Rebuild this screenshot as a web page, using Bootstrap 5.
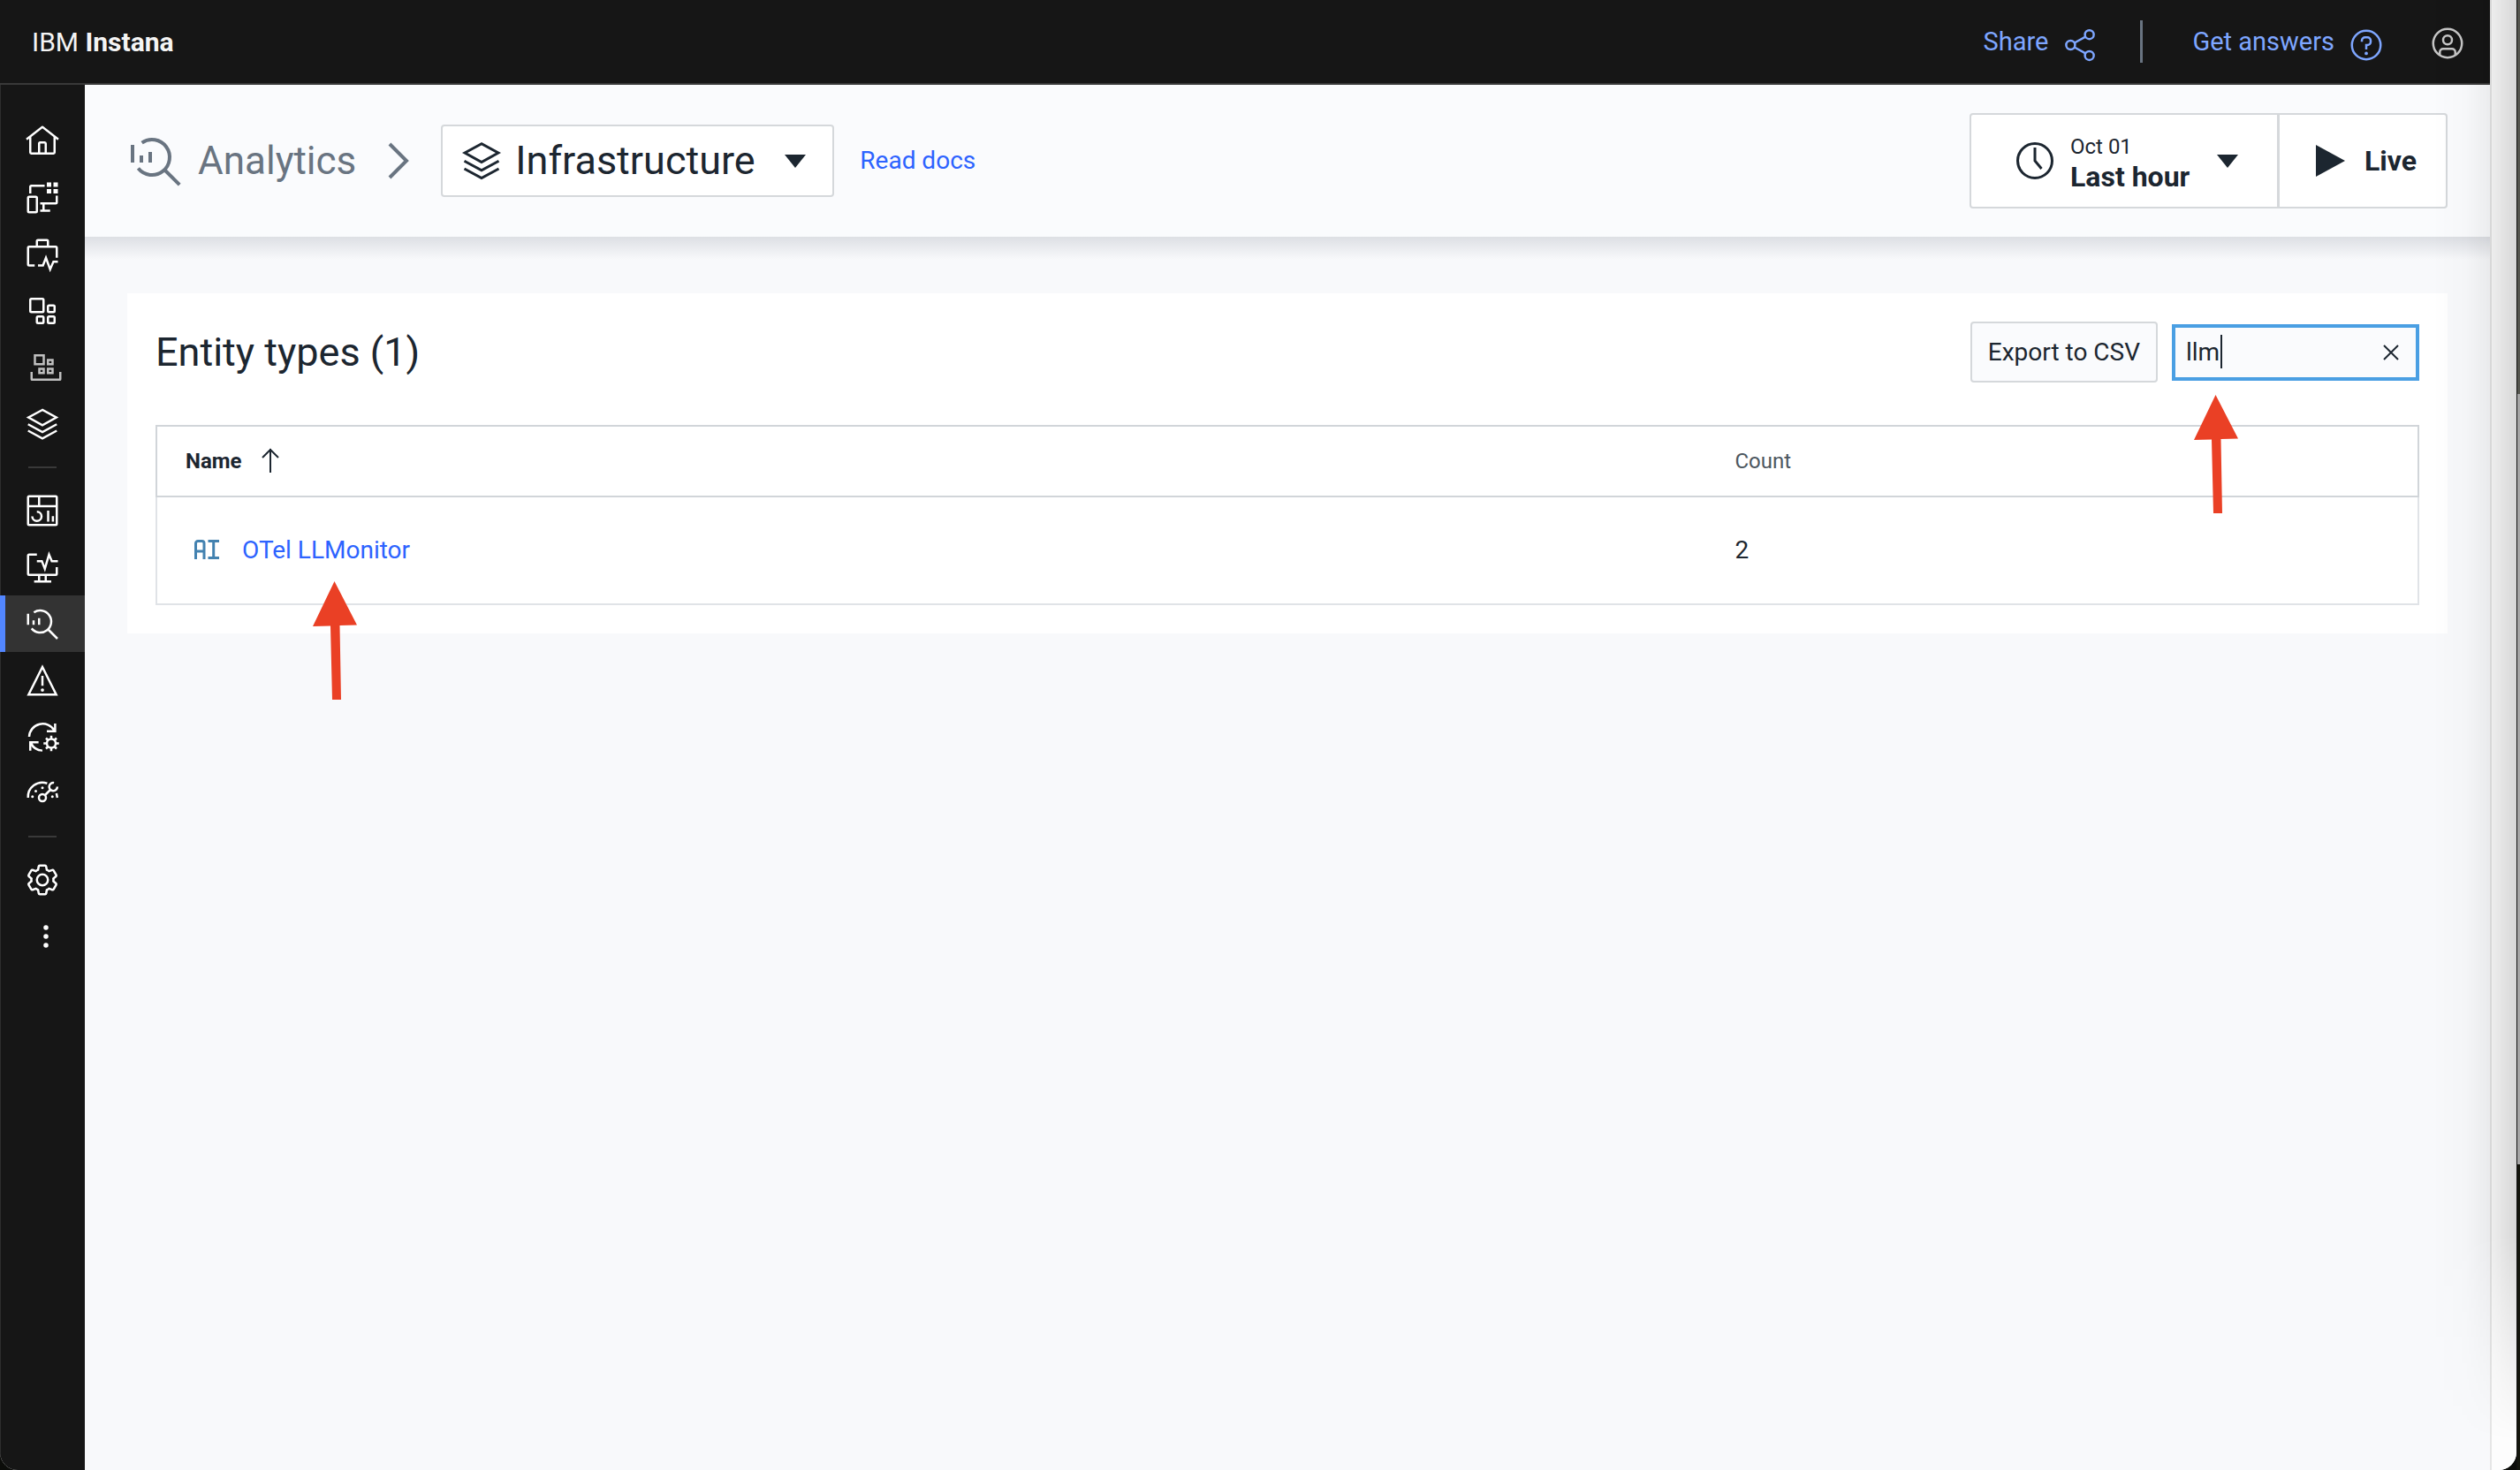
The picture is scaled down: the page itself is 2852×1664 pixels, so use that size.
<!DOCTYPE html>
<html lang="en">
<head>
<meta charset="utf-8">
<meta name="viewport" content="width=device-width, initial-scale=1">
<title>IBM Instana – Analytics</title>
<link href="https://cdn.jsdelivr.net/npm/bootstrap@5.3.0/dist/css/bootstrap.min.css" rel="stylesheet">
<style>
  :root { --ink: #1c2630; --line: #d5d8db; --link: #2d63ff; --dim: #697481; }
  body { font-family: Roboto, "Liberation Sans", sans-serif; font-size: 28px; line-height: 36px; color: var(--ink); background: #0c0d0a; }
  a { color: var(--link); text-decoration: none; }
  .ico { width: 40px; height: 40px; flex: none; fill: none; stroke: currentColor; stroke-width: 2; }
  .ico .solid { fill: currentColor; stroke: none; }
  .ico-md { width: 48px; height: 48px; }
  .ico-lg { width: 64px; height: 64px; }

  /* window */
  .app-window { border-radius: 0 0 20px 20px; overflow: hidden; background: #f8f9fb; }
  .scroll-gutter { width: 30px; background: #fdfdfd; border-left: 2px solid #e6e6e6; }
  .edge-shade { top: 0; right: 0; bottom: 0; width: 96px; pointer-events: none;
    background: linear-gradient(90deg, transparent, rgba(0,0,0,.015) 40%, rgba(0,0,0,.06) 70%, rgba(0,0,0,.15));
    -webkit-mask-image: linear-gradient(#000 84%, transparent 98%); mask-image: linear-gradient(#000 84%, transparent 98%); }
  .behind { width: 4px; background: linear-gradient(#55564f 0 446px, #a6a6a6 446px 1318px, #14160d 1318px); border-left: 1px solid #111; }

  /* top bar */
  .topbar { height: 96px; background: #161616; color: #f4f4f4; border-bottom: 2px solid #393939; padding: 0 28px 0 36px; font-size: 29px; }
  .topbar a { color: #7ea6ff; }
  .topbar .brand { color: #f4f4f4; font-size: 30px; padding-top: 2px; }
  .topbar .brand b { font-weight: 700; }
  .topbar .vline { width: 3px; height: 48px; background: #697481; margin: 0 56px 0 48px; }
  .topbar .account { color: #c6c6c6; margin-left: 52px; }

  /* side navigation */
  .sidebar { width: 96px; background: #161616; box-shadow: inset 1px 0 #2e2e2e; padding-top: 32px; }
  .side-item { height: 64px; color: #fff; }
  .side-item.current { background: #333; box-shadow: inset 6px 0 #5286ff; }
  .side-item.quiet { color: #c0c0c0; padding-left: 8px; }
  .side-rule { width: 32px; height: 2px; margin: 16px auto; background: #393939; }

  /* page heading */
  .page-head { height: 172px; background: #fafbfd; padding: 0 48px; }
  .crumb { font-size: 44px; line-height: 56px; color: var(--dim); }
  .crumb-sep { width: 24px; height: 44px; margin: 0 36px; fill: none; stroke: var(--dim); stroke-width: 4; }
  .scope { height: 82px; width: 445px; background: #fff; border: 2px solid var(--line); border-radius: 4px; padding: 0 30px 0 20px; gap: 14px; }
  .scope select { appearance: none; border: 0; background: transparent; padding: 0; font-size: 45px; line-height: 56px; color: var(--ink); outline: 0; }
  .tri-down { width: 24px; height: 15px; fill: var(--ink); flex: none; }
  .docs { margin-left: 29px; }
  .time-group .btn { height: 108px; background: #fff; border: 2px solid var(--line); border-radius: 4px; color: var(--ink); font-size: 32px; line-height: 36px; font-weight: 700; }
  .time-group .when { width: 350px; padding: 0 44px 0 48px; gap: 16px; text-align: left; }
  .time-group .when span { padding-top: 4px; }
  .time-group .when small { font-size: 24px; line-height: 32px; font-weight: 400; }
  .time-group .live { width: 192px; padding: 0 32px 0 40px; gap: 22px; }

  /* content */
  .content { padding: 64px 48px; background: #f8f9fb linear-gradient(#dddfe4, #f8f9fb 26px) no-repeat; }
  .panel { background: #fff; padding: 32px; }
  .panel h1 { font-size: 45px; line-height: 56px; font-weight: 400; }
  .panel-top { margin-bottom: 48px; gap: 16px; }
  .btn-export { height: 69px; padding: 0 18px; font-size: 28px; color: var(--ink); background: #fafbfd; border: 2px solid var(--line); border-radius: 4px; }
  .filter { width: 280px; }
  .filter input { height: 64px; border: 4px solid #4a9fe3; border-radius: 0; background: #fafbfd; padding: 0 56px 0 12px; font-size: 28px; color: var(--ink); }
  .filter .text-cursor { left: 55px; top: 12px; width: 2px; height: 38px; background: var(--ink); }
  .filter .clear { right: 22px; top: 22px; width: 20px; height: 20px; border: 0; background: none; padding: 0; line-height: 0; color: var(--ink); }
  .pointer { width: 50px; height: 135px; fill: #ea4025; z-index: 2; }
  .filter .pointer { left: 25px; top: 80px; }
  .entity .pointer { left: 80px; top: 52px; }
  .grid-table { border: 2px solid #e0e3e7; margin: 0; }
  .grid-table thead { border: 2px solid #d1d5d9; }
  .grid-table th { height: 80px; font-size: 24px; line-height: 32px; }
  .grid-table td { height: 122px; }
  .grid-table .col-name { width: 69%; }
  .grid-table th, .grid-table td { padding: 0 20px; vertical-align: middle; }
  .grid-table th:first-child { padding-left: 32px; }
  .grid-table td:first-child { padding-left: 42px; }
  .grid-table th.count { font-weight: 400; color: #4d5760; }
  .sort { width: 20px; height: 28px; margin-left: 22px; fill: none; stroke: var(--ink); stroke-width: 2; vertical-align: -5px; }
  .ai { width: 28px; height: 22px; margin-right: 26px; fill: none; stroke: #4382b0; stroke-width: 3; vertical-align: -1px; }
</style>
<script src="https://cdn.jsdelivr.net/npm/bootstrap@5.3.0/dist/js/bootstrap.bundle.min.js"></script>
</head>
<body>
<svg class="d-none">
  <symbol id="i-explore" viewBox="0 0 32 32"><path d="M3 7v10M8 13v4M13 11v6M8.3 5.8A10 10 0 1 1 6.2 20.3M21 21l8.6 8.6"/></symbol>
  <symbol id="i-layers" viewBox="0 0 32 32"><path d="M16 3.2 3.4 10 16 17l12.6-7ZM3 16.2l13 7 13-7M3 22l13 7 13-7"/></symbol>
  <symbol id="i-pointer" viewBox="0 0 50 135"><path d="M24.500 0 50 49.500 30.500 50 32 134H22L20 50.500 0 51Z"/></symbol>
</svg>

<div class="d-flex min-vh-100">
  <div class="app-window d-flex flex-grow-1 position-relative">
    <div class="d-flex flex-column flex-grow-1">

      <header class="topbar d-flex align-items-center">
        <a class="brand me-auto" href="#">IBM <b>Instana</b></a>
        <a class="d-flex align-items-center gap-3" href="#">Share
          <svg class="ico mt-2" viewBox="0 0 32 32"><circle cx="24.500" cy="6.500" r="4"/><circle cx="7.500" cy="16" r="4"/><circle cx="24.500" cy="25.500" r="4"/><path d="m11 14 10-5.500M11 18l10 5.500"/></svg>
        </a>
        <span class="vline"></span>
        <a class="d-flex align-items-center gap-3" href="#">Get answers
          <svg class="ico mt-2" viewBox="0 0 32 32"><circle cx="16" cy="16" r="13"/><path d="M12 13v-1a3 3 0 0 1 3-3h2a3 3 0 0 1 3 3v1a3 3 0 0 1-3 3h-1v4"/><circle class="solid" cx="16" cy="23.500" r="1.500"/></svg>
        </a>
        <a class="account" href="#" aria-label="Account">
          <svg class="ico mt-1" viewBox="0 0 32 32"><circle cx="16" cy="16" r="13"/><circle cx="16" cy="13" r="4"/><path d="M9 26.500V24a3 3 0 0 1 3-3h8a3 3 0 0 1 3 3v2.500"/></svg>
        </a>
      </header>

      <div class="d-flex flex-grow-1">
        <nav class="sidebar flex-shrink-0" aria-label="Main">
          <a class="side-item d-flex align-items-center justify-content-center" href="#" aria-label="Home">
            <svg class="ico" viewBox="0 0 32 32"><path class="solid" d="M16.6123,2.2138a1.01,1.01,0,0,0-1.2427,0L1,13.4194l1.2427,1.5717L4,13.6209V26a2.0041,2.0041,0,0,0,2,2H26a2.0037,2.0037,0,0,0,2-2V13.63L29.7573,15,31,13.4282ZM18,26H14V18h4Zm2,0V18a2.0023,2.0023,0,0,0-2-2H14a2.002,2.002,0,0,0-2,2v8H6V12.0615l10-7.79,10,7.8005V26Z"/></svg></a>
          <a class="side-item d-flex align-items-center justify-content-center" href="#" aria-label="Websites and mobile apps">
            <svg class="ico" viewBox="0 0 32 32"><rect x="3" y="15" width="8" height="14" rx="1"/><path d="M5 12V6a1 1 0 0 1 1-1h12M29 14v6a1 1 0 0 1-1 1H14M17 21v7M14 27.500h9"/><path class="solid" d="M20 2h4v4h-4zM26 2h4v4h-4zM20 8h4v4h-4zM26 8h4v4h-4z"/></svg></a>
          <a class="side-item d-flex align-items-center justify-content-center" href="#" aria-label="Business monitoring">
            <svg class="ico" viewBox="0 0 32 32"><path d="M9 26H4a1 1 0 0 1-1-1V10a1 1 0 0 1 1-1h24a1 1 0 0 1 1 1v9M11 9V4a1 1 0 0 1 1-1h8a1 1 0 0 1 1 1v5M12 26h4.500l2.700-7 3.800 10.500 3-7h4"/></svg></a>
          <a class="side-item d-flex align-items-center justify-content-center" href="#" aria-label="Applications">
            <svg class="ico" viewBox="0 0 32 32"><rect x="5" y="5" width="12" height="12" rx="1"/><rect x="21" y="11" width="6" height="6" rx="1"/><rect x="11" y="21" width="6" height="6" rx="1"/><rect x="21" y="21" width="6" height="6" rx="1"/></svg></a>
          <a class="side-item quiet d-flex align-items-center justify-content-center" href="#" aria-label="Platforms">
            <svg class="ico" viewBox="0 0 32 32"><path d="M6 5h8v8H6zM17.800 9.200H22V13h-4.200zM10 17.200h4V21h-4zM17.800 17.200H22V21h-4.200zM3 20v6.500a.5.5 0 0 0 .5.500h25a.5.5 0 0 0 .5-.500V20"/></svg></a>
          <a class="side-item d-flex align-items-center justify-content-center" href="#" aria-label="Infrastructure">
            <svg class="ico"><use href="#i-layers"/></svg></a>
          <div class="side-rule"></div>
          <a class="side-item d-flex align-items-center justify-content-center" href="#" aria-label="Custom dashboards">
            <svg class="ico" viewBox="0 0 32 32"><rect x="3" y="3" width="26" height="26" rx="1"/><path d="M3 12h26M13 3v9M11 17a4.200 4.200 0 1 1-4.200 4.200M21.200 16v10M25.500 21v5"/></svg></a>
          <a class="side-item d-flex align-items-center justify-content-center" href="#" aria-label="Synthetic monitoring">
            <svg class="ico" viewBox="0 0 32 32"><path d="M11 4.500H4a1 1 0 0 0-1 1V22a1 1 0 0 0 1 1h24a1 1 0 0 0 1-1v-6M13 23v6M19 23v6M8.500 29h15.500M11 10.500h4.500l2.700 7 3.800-13 2.500 6H30"/></svg></a>
          <a class="side-item current d-flex align-items-center justify-content-center" href="#" aria-label="Analytics" aria-current="page">
            <svg class="ico"><use href="#i-explore"/></svg></a>
          <a class="side-item d-flex align-items-center justify-content-center" href="#" aria-label="Events">
            <svg class="ico" viewBox="0 0 32 32"><path d="M16 4 3.500 29h25zM16 12v9"/><circle class="solid" cx="16" cy="24.800" r="1.500"/></svg></a>
          <a class="side-item d-flex align-items-center justify-content-center" href="#" aria-label="Automation">
            <svg class="ico" viewBox="0 0 32 32"><path d="M4 16A12.300 12.300 0 0 1 27 10.500M27.500 4v7h-7.500M5 28.500V21h7.500M5.500 21.500A12 12 0 0 0 16 28.500"/><circle cx="24" cy="22" r="4"/><path d="M24 18v-3M24 26v3M20 22h-3M28 22h3M21.200 19.200l-2-2M26.800 24.800l2 2M21.200 24.800l-2 2M26.800 19.200l2-2"/></svg></a>
          <a class="side-item d-flex align-items-center justify-content-center" href="#" aria-label="Service levels">
            <svg class="ico" viewBox="0 0 32 32"><path d="M3 20A13 13 0 0 1 20.300 7M28.700 16l.8 4"/><circle cx="16" cy="20" r="3.200"/><path d="m18.200 17.800 5-5M26.500 6.500a3.700 3.700 0 1 0 3 3.500"/><g class="solid"><circle cx="7" cy="19" r="1.200"/><circle cx="10" cy="14" r="1.200"/><circle cx="16" cy="11" r="1.200"/><circle cx="25" cy="19" r="1.200"/></g></svg></a>
          <div class="side-rule"></div>
          <a class="side-item d-flex align-items-center justify-content-center" href="#" aria-label="Settings">
            <svg class="ico" viewBox="0 0 32 32"><path class="solid" d="M27,16.76c0-.25,0-.5,0-.76s0-.51,0-.77l1.92-1.68A2,2,0,0,0,29.3,11L26.94,7a2,2,0,0,0-1.73-1,2,2,0,0,0-.64.1l-2.43.82a11.35,11.35,0,0,0-1.31-.75l-.51-2.52a2,2,0,0,0-2-1.61H13.64a2,2,0,0,0-2,1.61l-.51,2.52a11.48,11.48,0,0,0-1.32.75L7.43,6.06A2,2,0,0,0,6.79,6,2,2,0,0,0,5.06,7L2.7,11a2,2,0,0,0,.41,2.51L5,15.24c0,.25,0,.5,0,.76s0,.51,0,.77L3.11,18.45A2,2,0,0,0,2.7,21L5.06,25a2,2,0,0,0,1.73,1,2,2,0,0,0,.64-.1l2.43-.82a11.35,11.35,0,0,0,1.31.75l.51,2.52a2,2,0,0,0,2,1.61h4.72a2,2,0,0,0,2-1.61l.51-2.52a11.48,11.48,0,0,0,1.32-.75l2.42.82a2,2,0,0,0,.64.1,2,2,0,0,0,1.73-1L29.3,21a2,2,0,0,0-.41-2.51ZM25.21,24l-3.43-1.16a8.86,8.86,0,0,1-2.71,1.57L18.36,28H13.64l-.71-3.55a9.36,9.36,0,0,1-2.7-1.57L6.79,24,4.43,20l2.72-2.4a8.9,8.9,0,0,1,0-3.13L4.43,12,6.79,8l3.43,1.16a8.86,8.86,0,0,1,2.71-1.57L13.64,4h4.72l.71,3.55a9.36,9.36,0,0,1,2.7,1.57L25.21,8,27.57,12l-2.72,2.4a8.9,8.9,0,0,1,0,3.13L27.57,20Z"/><circle cx="16" cy="16" r="5"/></svg></a>
          <a class="side-item quiet text-white d-flex align-items-center justify-content-center" href="#" aria-label="More">
            <svg class="ico" viewBox="0 0 32 32"><g class="solid"><circle cx="16" cy="8" r="2.200"/><circle cx="16" cy="16" r="2.200"/><circle cx="16" cy="24" r="2.200"/></g></svg></a>
        </nav>

        <div class="d-flex flex-column flex-grow-1">
          <div class="page-head d-flex align-items-center">
            <a class="crumb d-flex align-items-center gap-3" href="#"><svg class="ico ico-lg"><use href="#i-explore"/></svg>Analytics</a>
            <svg class="crumb-sep" viewBox="0 0 24 44"><path d="m2 3 19 19L2 41"/></svg>
            <label class="scope d-flex align-items-center">
              <svg class="ico ico-md"><use href="#i-layers"/></svg>
              <select aria-label="Scope"><option>Infrastructure</option></select>
              <svg class="tri-down ms-auto" viewBox="0 0 24 15"><path d="M0 0h24L12 15z"/></svg>
            </label>
            <a class="docs" href="#">Read docs</a>
            <div class="time-group btn-group ms-auto">
              <button type="button" class="btn when d-flex align-items-center">
                <svg class="ico ico-md" viewBox="0 0 32 32"><circle cx="16" cy="16" r="13"/><path d="M16 6v10l5 6"/></svg>
                <span><small class="d-block">Oct 01</small>Last hour</span>
                <svg class="tri-down ms-auto" viewBox="0 0 24 15"><path d="M0 0h24L12 15z"/></svg>
              </button>
              <button type="button" class="btn live d-flex align-items-center">
                <svg width="34" height="36" viewBox="0 0 34 36"><path d="M1 0v36l33-18z" fill="currentColor"/></svg>Live
              </button>
            </div>
          </div>

          <main class="content flex-grow-1">
            <section class="panel">
              <div class="panel-top d-flex align-items-center">
                <h1 class="mb-0 me-auto">Entity types (1)</h1>
                <button type="button" class="btn btn-export">Export to CSV</button>
                <div class="filter position-relative">
                  <input class="form-control" type="text" value="llm" aria-label="Filter entity types">
                  <span class="text-cursor position-absolute"></span>
                  <button type="button" class="clear position-absolute" aria-label="Clear filter"><svg width="20" height="20" viewBox="0 0 20 20" fill="none" stroke="currentColor" stroke-width="2"><path d="m2 2 16 16M18 2 2 18"/></svg></button>
                  <svg class="pointer position-absolute"><use href="#i-pointer"/></svg>
                </div>
              </div>
              <table class="grid-table w-100">
                <thead>
                  <tr>
                    <th class="col-name" scope="col" aria-sort="ascending">Name<svg class="sort" viewBox="0 0 20 28"><path d="M10 28V1M1 11l9-9 9 9"/></svg></th>
                    <th class="count" scope="col">Count</th>
                  </tr>
                </thead>
                <tbody>
                  <tr>
                    <td><svg class="ai" viewBox="0 0 28 22"><path d="M1.500 22V4a2.500 2.500 0 0 1 2.500-2.500h4.500A2.500 2.500 0 0 1 11 4v18M1.500 13H11M15.500 1.500H28M15.500 20.500H28M21.700 1.500v19"/></svg><span class="entity position-relative"><a href="#">OTel LLMonitor</a><svg class="pointer position-absolute"><use href="#i-pointer"/></svg></span></td>
                    <td>2</td>
                  </tr>
                </tbody>
              </table>
            </section>
          </main>
        </div>
      </div>
    </div>
    <div class="scroll-gutter flex-shrink-0"></div>
    <div class="edge-shade position-absolute"></div>
  </div>
  <div class="behind flex-shrink-0"></div>
</div>
</body>
</html>
